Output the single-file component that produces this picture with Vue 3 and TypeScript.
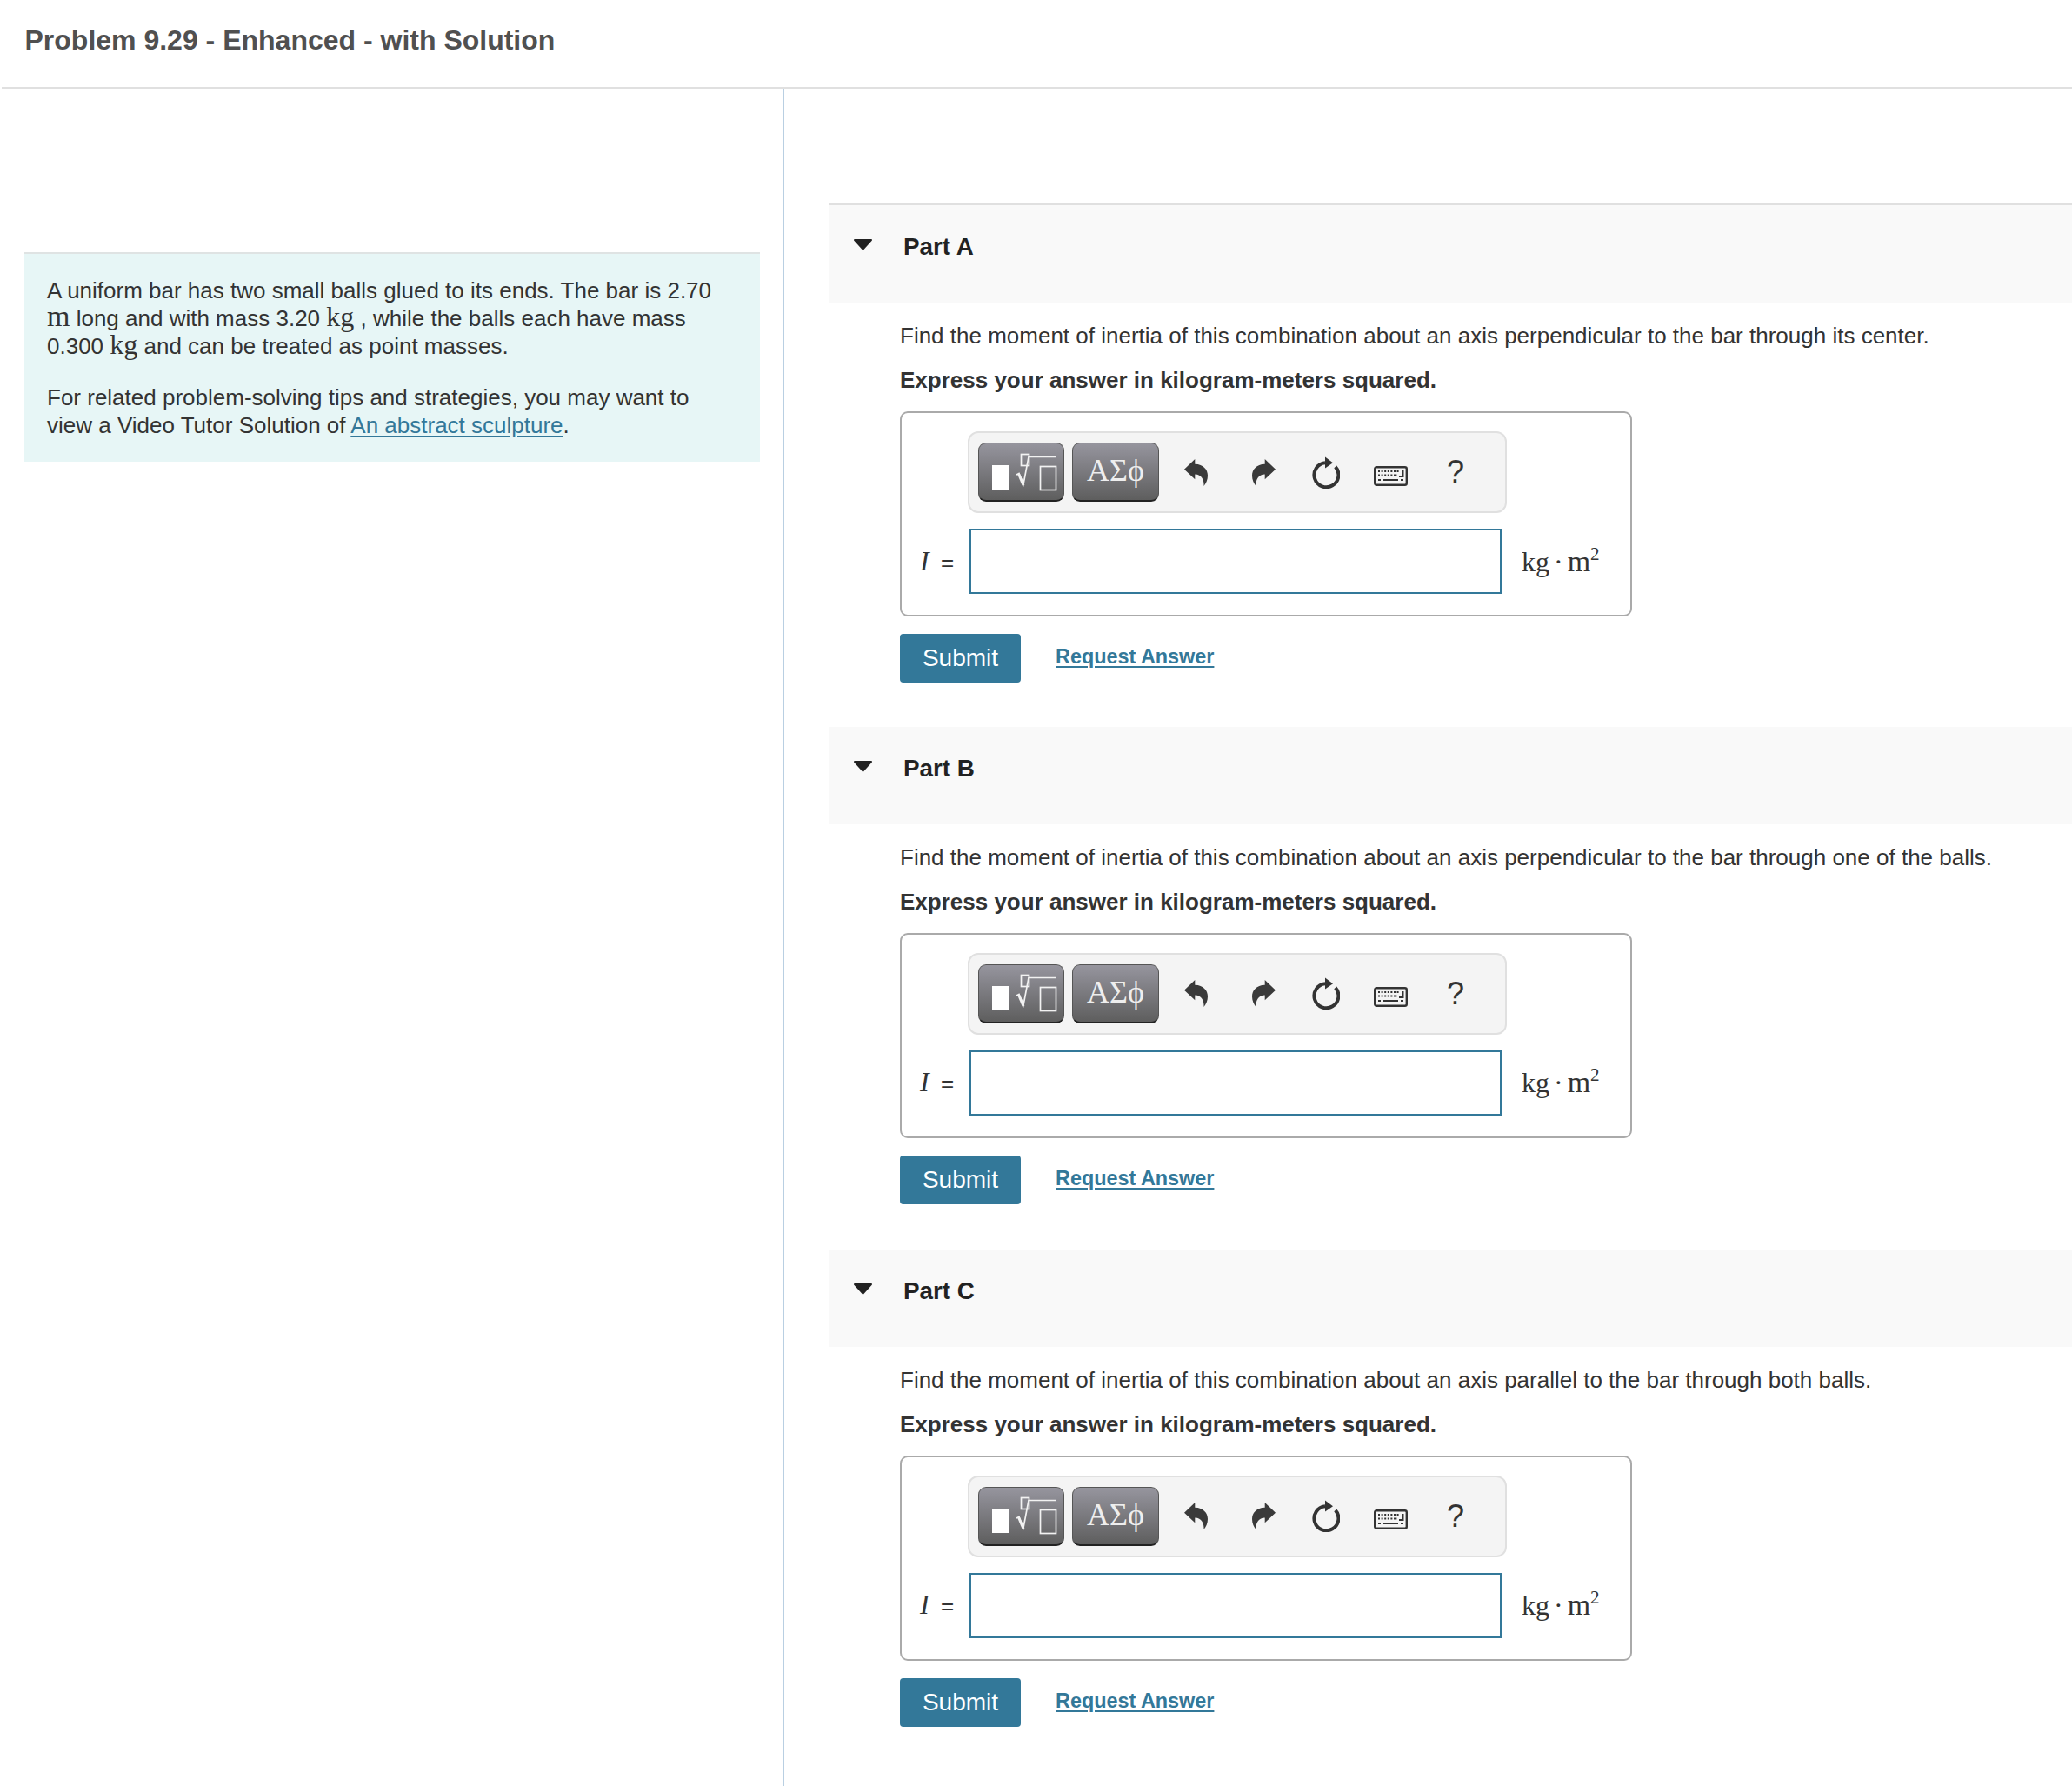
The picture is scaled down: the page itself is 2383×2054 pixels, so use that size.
<script setup lang="ts">
interface Part {
  name: string
  question: string
}
const parts: Part[] = [
  { name: 'Part A', question: 'Find the moment of inertia of this combination about an axis perpendicular to the bar through its center.' },
  { name: 'Part B', question: 'Find the moment of inertia of this combination about an axis perpendicular to the bar through one of the balls.' },
  { name: 'Part C', question: 'Find the moment of inertia of this combination about an axis parallel to the bar through both balls.' },
]
</script>

<template>
  <div class="page">
    <header class="top">
      <h1 class="title">Problem 9.29 - Enhanced - with Solution</h1>
    </header>
    <div class="columns">
      <aside class="left">
        <div class="intro">
          <p>A uniform bar has two small balls glued to its ends. The bar is 2.70 <span class="unit wide">m</span> long and with mass 3.20 <span class="unit">kg</span> , while the balls each have mass 0.300 <span class="unit">kg</span> and can be treated as point masses.</p>
          <p>For related problem-solving tips and strategies, you may want to view a Video Tutor Solution of <a class="link" href="#">An abstract sculpture</a>.</p>
        </div>
      </aside>
      <main class="right">
        <section v-for="part in parts" :key="part.name" class="part">
          <div class="part-head">
            <svg class="caret" width="24" height="15" viewBox="0 0 24 15">
              <path d="M2 2H21L11.5 12.5Z" fill="#222" stroke="#222" stroke-width="2" stroke-linejoin="round" />
            </svg>
            <span class="part-name">{{ part.name }}</span>
          </div>
          <div class="part-body">
            <p class="question">{{ part.question }}</p>
            <p class="express">Express your answer in kilogram-meters squared.</p>
            <div class="answer">
              <div class="toolbar">
                <button class="tpl" type="button" aria-label="Templates">
                  <svg width="97" height="66" viewBox="0 0 97 66">
                    <rect x="15" y="25" width="20" height="28" fill="#fff" />
                    <rect x="48.5" y="12.5" width="9" height="13" fill="none" stroke="#f2f2f2" stroke-width="1.7" />
                    <path d="M43 36L46 34.5L51 47L57 15.5H89" fill="none" stroke="#f2f2f2" stroke-width="1.7" />
                    <path d="M45.5 35L51 48" fill="none" stroke="#f2f2f2" stroke-width="3" />
                    <rect x="70.5" y="26.5" width="18" height="27" fill="none" stroke="#f2f2f2" stroke-width="1.7" />
                  </svg>
                </button>
                <button class="tpl greek" type="button">ΑΣϕ</button>
                <svg class="ico undo" width="28" height="31" viewBox="0 0 28 31">
                  <path d="M0 11.7L12.3 0V5.7C22 6 27 12 27 19C27 24 25 28 22.5 31C23 24 20 17.5 12.3 17.5V23.3Z" fill="#3a3a3a" />
                </svg>
                <svg class="ico redo" width="28" height="31" viewBox="0 0 28 31">
                  <path transform="matrix(-1 0 0 1 28 0)" d="M0 11.7L12.3 0V5.7C22 6 27 12 27 19C27 24 25 28 22.5 31C23 24 20 17.5 12.3 17.5V23.3Z" fill="#3a3a3a" />
                </svg>
                <svg class="ico reload" width="32" height="37" viewBox="0 0 32 37">
                  <path d="M26.8 11.8A14 14 0 1 1 15 7.3" fill="none" stroke="#333" stroke-width="4" />
                  <path d="M15 0.5L24 7.2L15 13.5Z" fill="#333" />
                </svg>
                <svg class="ico keys" width="39" height="23" viewBox="0 0 39 23">
                  <rect x="1.2" y="1.2" width="36.6" height="20.6" rx="2" fill="none" stroke="#333" stroke-width="2.4" />
                  <g fill="none" stroke="#333" stroke-width="2">
                    <path d="M5 6H30" stroke-dasharray="2 1.6" />
                    <path d="M5 10.5H27" stroke-dasharray="2 1.6" />
                    <path d="M33.5 5V12H29" />
                    <path d="M5 16H8M11 16H28M31 16H34" />
                  </g>
                </svg>
                <span class="help">?</span>
              </div>
              <div class="entry">
                <span class="lhs"><i class="var">I</i> =</span>
                <input class="field" type="text" aria-label="Answer" />
                <span class="units">kg · <span class="wide">m</span><sup>2</sup></span>
              </div>
            </div>
            <div class="actions">
              <button class="submit" type="button">Submit</button>
              <a class="request" href="#">Request Answer</a>
            </div>
          </div>
        </section>
      </main>
    </div>
  </div>
</template>

<style>
html, body { margin: 0; background: #fff; }
</style>

<style scoped>
.page {
  width: 2383px;
  height: 2054px;
  display: flex;
  flex-direction: column;
  overflow: hidden;
  font-family: "Liberation Sans", Arial, sans-serif;
  font-size: 26px;
  line-height: 32px;
  color: #333;
  background: #fff;
}
.top {
  flex: none;
  height: 100px;
  margin-left: 2px;
  padding-left: 26.5px;
  display: flex;
  align-items: center;
  border-bottom: 2px solid #e0e0e0;
}
.title {
  margin: -9px 0 0;
  font-size: 32px;
  line-height: 40px;
  font-weight: 700;
  color: #505050;
}
.columns {
  flex: 1;
  display: flex;
  min-height: 0;
}
.left {
  flex: none;
  width: 902px;
  box-sizing: border-box;
  padding: 188px 26px 0 28px;
  border-right: 2px solid #b9cfe2;
}
.intro {
  box-sizing: border-box;
  height: 241px;
  padding: 26px 26px 0;
  background: #e7f6f6;
  border-top: 2px solid #dfe3e3;
}
.intro p { margin: 0 0 27px; }
.unit {
  font-family: "Liberation Serif", "Times New Roman", serif;
  font-size: 32px;
  line-height: 0;
}
.link {
  color: #337899;
  text-decoration: underline;
  text-underline-offset: 3px;
}
.right {
  flex: 1;
  min-width: 0;
  padding: 132px 0 0 52px;
}
.part-head {
  box-sizing: border-box;
  height: 112px;
  display: flex;
  align-items: flex-start;
  background: #f9f9f9;
}
.part:first-child .part-head {
  height: 114px;
  border-top: 2px solid #e0e0e0;
}
.part:first-child .part-body {
  padding-bottom: 51.4px;
}
.caret {
  margin: 38px 0 0 27px;
}
.part-name {
  margin: 32px 0 0 34px;
  font-size: 27.8px;
  font-weight: 700;
  color: #222;
}
.part-body {
  padding: 22px 0 52.4px 81px;
}
.question {
  margin: 0;
}
.express {
  margin: 19px 0 0;
  font-weight: 700;
}
.answer {
  box-sizing: border-box;
  width: 842px;
  height: 235.6px;
  margin-top: 20px;
  padding: 21px 0 0 76px;
  border: 2px solid #aaa;
  border-radius: 9px;
}
.toolbar {
  box-sizing: border-box;
  width: 620px;
  height: 94px;
  display: flex;
  align-items: center;
  padding-left: 10px;
  background: #f4f4f4;
  border: 2px solid #e0e0e0;
  border-radius: 12px;
}
.tpl {
  flex: none;
  box-sizing: border-box;
  width: 99px;
  height: 68px;
  padding: 0;
  border: 1px solid #555;
  border-bottom: 2px solid #222;
  border-radius: 9px;
  background: linear-gradient(#96959e, #5e5e5e);
  display: flex;
  align-items: center;
  justify-content: center;
}
.greek {
  width: 100px;
  margin-left: 9px;
  padding-bottom: 3px;
  font-family: "Liberation Serif", "Times New Roman", serif;
  font-size: 36px;
  color: #eee;
}
.ico { flex: none; }
.undo { margin-left: 29px; }
.redo { margin-left: 49px; }
.reload { margin-left: 42px; }
.keys { margin-left: 39px; margin-top: 8px; }
.help {
  margin-left: 45px;
  font-size: 36px;
  line-height: 40px;
  color: #333;
}
.entry {
  display: flex;
  align-items: center;
  margin: 18px 0 0 -76px;
}
.lhs {
  box-sizing: border-box;
  width: 78px;
  padding-left: 21px;
  white-space: nowrap;
  font-size: 26px;
}
.var {
  font-family: "Liberation Serif", "Times New Roman", serif;
  font-size: 32px;
  margin-right: 6px;
}
.field {
  box-sizing: border-box;
  width: 612px;
  height: 75px;
  padding: 0;
  border: 2px solid #337899;
  background: #fff;
  outline: none;
}
.units {
  margin-left: 23px;
  font-family: "Liberation Serif", "Times New Roman", serif;
  font-size: 32px;
  word-spacing: -3px;
  white-space: nowrap;
  color: #333;
}
.wide {
  font-size: 34px;
}
.units sup {
  font-size: 21px;
  line-height: 0;
  vertical-align: 13px;
}
.actions {
  display: flex;
  align-items: center;
  margin-top: 20px;
}
.submit {
  box-sizing: border-box;
  width: 139px;
  height: 56px;
  padding: 0;
  border: 0;
  border-radius: 4px;
  background: #337899;
  color: #fff;
  font-family: inherit;
  font-size: 28px;
}
.request {
  margin: -3px 0 0 40px;
  color: #337899;
  font-size: 23.4px;
  font-weight: 700;
  text-decoration: underline;
  text-underline-offset: 3px;
}
</style>
